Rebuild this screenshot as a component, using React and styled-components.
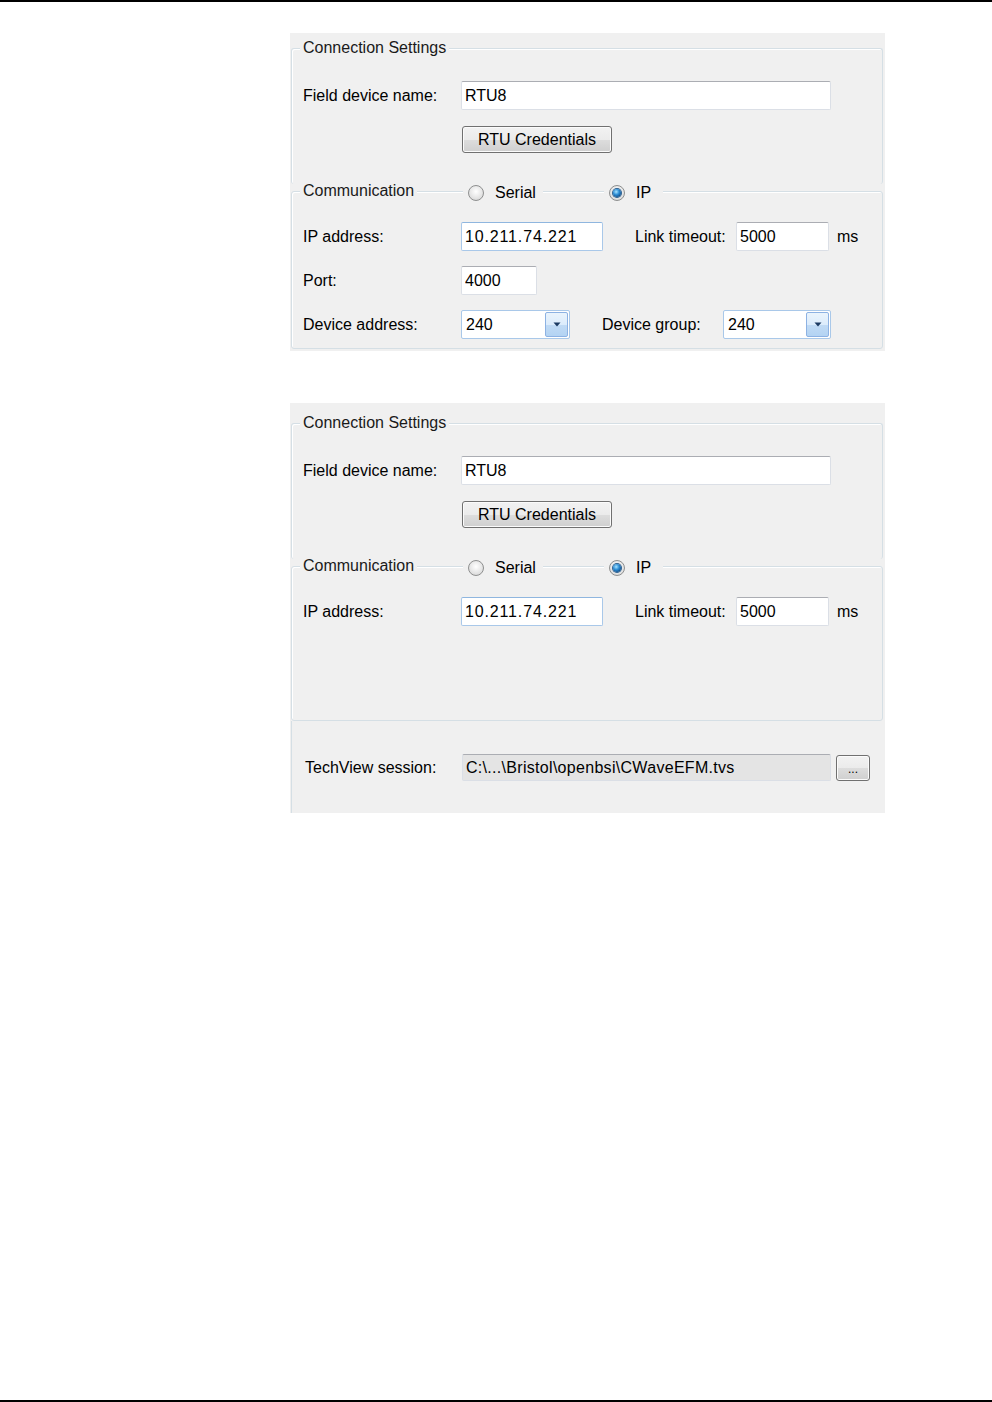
import React from "react";
import styled, { createGlobalStyle } from "styled-components";

const GlobalStyle = createGlobalStyle`
  html, body {
    margin: 0;
    padding: 0;
    background: #fff;
  }
  body {
    font-family: "Liberation Sans", Arial, sans-serif;
    font-size: 16px;
    color: #000;
  }
`;

const Page = styled.div`
  width: 992px;
  height: 1402px;
  box-sizing: border-box;
  border-top: 2px solid #000;
  border-bottom: 2px solid #000;
  padding: 31px 0 0 290px;
`;

const Panel = styled.div`
  width: 595px;
  box-sizing: border-box;
  background: #f0f0f0;
  padding: ${({ $top }) => $top}px 2px ${({ $bottom }) => $bottom}px 1px;
  margin-bottom: 52px;
`;

const Group = styled.div`
  border: 1px solid #d5dfe5;
  border-bottom: ${({ $open }) => ($open ? "none" : "1px solid #d5dfe5")};
  border-radius: 3px;
  box-shadow: inset 1px 1px 0 #fff;
  padding: 0 0 ${({ $pb }) => $pb}px 8px;
  margin-top: ${({ $mt }) => $mt || 0}px;
`;

const Header = styled.div`
  display: flex;
  align-items: center;
  height: 20px;
  margin-top: -11px;
`;

const HeadCell = styled.div`
  width: ${({ $w }) => $w}px;
  flex-shrink: 0;
  display: flex;
  align-items: center;
`;

const Title = styled.span`
  background: #f0f0f0;
  padding: 0 3px;
  line-height: 20px;
  color: #1a1a1a;
`;

const RadioItem = styled.label`
  display: flex;
  align-items: center;
  gap: 11px;
  background: #f0f0f0;
  margin-left: ${({ $ml }) => $ml || 0}px;
  padding: 0 ${({ $pr }) => $pr}px 0 5px;
  height: 20px;
  line-height: 20px;
  position: relative;
  top: 2px;
`;

const RadioCircle = styled.span`
  width: 16px;
  height: 16px;
  box-sizing: border-box;
  border-radius: 50%;
  border: 1px solid #8e8f8f;
  background: radial-gradient(circle at 50% 40%, #ffffff 0%, #e6e6e6 55%, #cfcfcf 100%);
  display: flex;
  align-items: center;
  justify-content: center;
`;

const RadioDot = styled.span`
  width: 8px;
  height: 8px;
  border-radius: 50%;
  background: radial-gradient(circle at 40% 35%, #a9e4ff 0%, #2f8fd6 40%, #0d4a86 80%, #0a3463 100%);
  box-shadow: 0 0 0 1px #2b5f8f;
`;

const Row = styled.div`
  display: flex;
  align-items: center;
  padding-left: ${({ $indent }) => 3 + ($indent || 0)}px;
  margin-top: ${({ $mt }) => $mt || 0}px;
`;

const Label = styled.span`
  width: ${({ $w }) => $w}px;
  flex-shrink: 0;
  margin-left: ${({ $ml }) => $ml || 0}px;
`;

const TextBox = styled.input`
  box-sizing: border-box;
  width: ${({ $w }) => $w}px;
  height: ${({ $h }) => $h || 29}px;
  border: 1px solid ${({ $focus }) => ($focus ? "#a9c8e9" : "#dbdfe6")};
  border-top-color: ${({ $focus }) => ($focus ? "#8fb6df" : "#abadb3")};
  border-radius: 2px;
  background: ${({ $disabled }) => ($disabled ? "#e4e4e4" : "#fff")};
  font: inherit;
  letter-spacing: ${({ $ls }) => $ls || 0}px;
  color: #000;
  padding: 0 3px;
  outline: none;
  margin: 0;
`;

const Combo = styled.div`
  box-sizing: border-box;
  width: ${({ $w }) => $w}px;
  height: 29px;
  border: 1px solid #a9c8e9;
  border-radius: 2px;
  background: #fff;
  display: flex;
  align-items: center;
  justify-content: space-between;
  padding: 0 1px 0 4px;
`;

const DropButton = styled.span`
  box-sizing: border-box;
  width: 23px;
  height: 25px;
  border: 1px solid #8db2e3;
  border-radius: 2px;
  background: linear-gradient(#eaf4fc 0%, #dcecfc 50%, #c1dbf5 51%, #b3d3f3 100%);
  display: flex;
  align-items: center;
  justify-content: center;
`;

const Unit = styled.span`
  margin-left: 8px;
`;

const Button = styled.button`
  box-sizing: border-box;
  width: ${({ $w }) => $w}px;
  height: ${({ $h }) => $h || 27}px;
  padding: 0;
  margin: 0 0 0 ${({ $ml }) => $ml || 0}px;
  font: inherit;
  font-size: ${({ $fs }) => $fs || 16}px;
  color: #000;
  border: 1px solid #707070;
  border-radius: 3px;
  background: linear-gradient(#f2f2f2 0%, #ebebeb 50%, #dddddd 51%, #cfcfcf 100%);
  box-shadow: inset 0 0 0 1px #fbfbfb;
  display: flex;
  align-items: ${({ $low }) => ($low ? "flex-end" : "center")};
  justify-content: center;
  padding-bottom: ${({ $low }) => ($low ? 4 : 0)}px;
`;

const Section = styled.div`
  border-left: 1px solid #d5dfe5;
  padding: 33px 0 32px 0;
`;

const Arrow = () => (
  <svg width="8" height="5" viewBox="0 0 8 5">
    <path d="M0.5 0.5 L7.5 0.5 L4 4.5 Z" fill="#1c3a62" />
  </svg>
);

const Radio = ({ checked, label, ml, pr }) => (
  <RadioItem $ml={ml} $pr={pr}>
    <RadioCircle>{checked && <RadioDot />}</RadioCircle>
    {label}
  </RadioItem>
);

const ConnectionGroup = () => (
  <Group $open $pb={31}>
    <Header>
      <HeadCell $w={161}>
        <Title>Connection Settings</Title>
      </HeadCell>
    </Header>
    <Row $mt={23}>
      <Label $w={158}>Field device name:</Label>
      <TextBox $w={370} readOnly value="RTU8" />
    </Row>
    <Row $mt={16} $indent={159}>
      <Button $w={150}>RTU Credentials</Button>
    </Row>
  </Group>
);

const CommHeader = () => (
  <Header>
    <HeadCell $w={161}>
      <Title>Communication</Title>
    </HeadCell>
    <HeadCell $w={143}>
      <Radio label="Serial" ml={2} pr={7} />
    </HeadCell>
    <HeadCell $w={80}>
      <Radio checked label="IP" pr={12} />
    </HeadCell>
  </Header>
);

const IpRow = () => (
  <Row $mt={21}>
    <Label $w={158}>IP address:</Label>
    <TextBox $w={142} $ls={0.85} $focus readOnly value="10.211.74.221" />
    <Label $w={101} $ml={32}>Link timeout:</Label>
    <TextBox $w={93} readOnly value="5000" />
    <Unit>ms</Unit>
  </Row>
);

export default function App() {
  return (
    <>
      <GlobalStyle />
      <Page>
        <Panel $top={15} $bottom={2}>
          <ConnectionGroup />
          <Group $mt={7} $pb={9}>
            <CommHeader />
            <IpRow />
            <Row $mt={15}>
              <Label $w={158}>Port:</Label>
              <TextBox $w={76} readOnly value="4000" />
            </Row>
            <Row $mt={15}>
              <Label $w={158}>Device address:</Label>
              <Combo $w={109}>
                240
                <DropButton>
                  <Arrow />
                </DropButton>
              </Combo>
              <Label $w={121} $ml={32}>Device group:</Label>
              <Combo $w={108}>
                240
                <DropButton>
                  <Arrow />
                </DropButton>
              </Combo>
            </Row>
          </Group>
        </Panel>

        <Panel $top={20} $bottom={0}>
          <ConnectionGroup />
          <Group $mt={7} $pb={94}>
            <CommHeader />
            <IpRow />
          </Group>
          <Section>
            <Row $indent={10}>
              <Label $w={157}>TechView session:</Label>
              <TextBox
                $w={369}
                $h={27}
                $ls={0.3}
                $disabled
                readOnly
                value="C:\...\Bristol\openbsi\CWaveEFM.tvs"
              />
              <Button $w={34} $h={26} $ml={5} $fs={12} $low>
                ...
              </Button>
            </Row>
          </Section>
        </Panel>
      </Page>
    </>
  );
}
